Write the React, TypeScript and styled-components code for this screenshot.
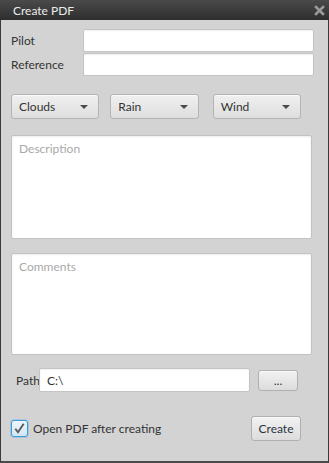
import React from 'react';
import styled, { createGlobalStyle } from 'styled-components';

const GlobalStyle = createGlobalStyle`
  html, body {
    margin: 0;
    padding: 0;
    background: #d3d3d3;
  }
  * {
    box-sizing: border-box;
  }
`;

const Window = styled.div`
  width: 329px;
  height: 463px;
  display: flex;
  flex-direction: column;
  background: #d3d3d3;
  border-left: 1px solid #3a3a3a;
  border-right: 1px solid #3a3a3a;
  border-bottom: 2px solid #4a4a4a;
  font-family: Lato, "Liberation Sans", sans-serif;
  font-size: 12px;
  color: #333;
`;

const TitleBar = styled.div`
  height: 20px;
  flex: none;
  display: flex;
  align-items: center;
  justify-content: space-between;
  padding: 0 4px 0 13px;
  background: linear-gradient(#4a4a4a, #2e2e2e);
  color: #ececec;
  font-size: 12px;
  margin: 0 -1px;
`;

const Close = styled.svg`
  width: 11px;
  height: 11px;
`;

const Body = styled.div`
  flex: 1;
  display: flex;
  flex-direction: column;
  padding: 9px 27px 0 9px;
`;

const FormGrid = styled.div`
  display: grid;
  grid-template-columns: 73px 231px;
  grid-auto-rows: 23px;
  row-gap: 1px;
  align-items: center;
`;

const Label = styled.span<{ $indent?: number; $width?: number }>`
  padding-left: ${(p) => p.$indent ?? 0}px;
  width: ${(p) => (p.$width ? `${p.$width}px` : 'auto')};
  flex: none;
`;

const TextField = styled.div<{ $width?: number }>`
  height: ${(p) => (p.$width ? '24px' : '23px')};
  width: ${(p) => (p.$width ? `${p.$width}px` : 'auto')};
  background: #fff;
  border: 1px solid #c4c4c4;
  border-radius: 2px;
  box-shadow: inset 0 1px 2px rgba(0, 0, 0, 0.06);
  display: flex;
  align-items: center;
  padding: 1px 0 0 7px;
  color: #333;
`;

const ComboRow = styled.div`
  display: flex;
  gap: 11px;
  margin-top: 18px;
  padding-left: 1px;
`;

const Combo = styled.div<{ $shift?: number }>`
  width: 89px;
  height: 25px;
  margin-left: ${(p) => p.$shift ?? 0}px;
  display: flex;
  align-items: center;
  justify-content: space-between;
  padding: 0 10px 0 7px;
  border: 1px solid #b4b4b4;
  border-radius: 3px;
  background: linear-gradient(#f0f0f0, #dedede);
  box-shadow: inset 0 1px 0 #fafafa;
  color: #333;
`;

const Arrow = styled.span`
  width: 0;
  height: 0;
  border-left: 4px solid transparent;
  border-right: 4px solid transparent;
  border-top: 4px solid #4a4a4a;
`;

const TextArea = styled.div<{ $height: number; $top: number }>`
  width: 301px;
  height: ${(p) => p.$height}px;
  margin: ${(p) => p.$top}px 0 0 1px;
  background: #fff;
  border: 1px solid #c2c2c2;
  border-radius: 2px;
  box-shadow: inset 0 1px 2px rgba(0, 0, 0, 0.08);
  padding: 5px 7px;
  color: #a9a9a9;
`;

const PathRow = styled.div`
  display: flex;
  align-items: center;
  margin-top: 13px;
`;

const Button = styled.div<{ $width: number; $height: number }>`
  width: ${(p) => p.$width}px;
  height: ${(p) => p.$height}px;
  flex: none;
  display: flex;
  align-items: center;
  justify-content: center;
  border: 1px solid #b0b0b0;
  border-radius: 3px;
  background: linear-gradient(#f2f2f2, #dcdcdc);
  box-shadow: inset 0 1px 0 #fbfbfb;
  color: #2a3442;
`;

const BrowseButton = styled(Button)`
  margin-left: 8px;
`;

const BottomRow = styled.div`
  display: flex;
  align-items: center;
  justify-content: space-between;
  margin-top: 24px;
`;

const CheckLabel = styled.label`
  display: flex;
  align-items: center;
  gap: 5px;
  padding-left: 1px;
`;

const CheckBox = styled.span`
  width: 17px;
  height: 17px;
  border: 1px solid #3c9ad6;
  border-radius: 3px;
  background: linear-gradient(#eef5fb, #d3e6f4);
  box-shadow: 0 0 0 1px rgba(100, 170, 220, 0.35);
  display: flex;
  align-items: center;
  justify-content: center;
`;

export default function App() {
  return (
    <>
      <GlobalStyle />
      <Window>
        <TitleBar>
          <span>Create PDF</span>
          <Close viewBox="0 0 11 11">
            <path d="M2 2 L9 9 M9 2 L2 9" stroke="#9a9a9a" strokeWidth="2.6" strokeLinecap="square" />
          </Close>
        </TitleBar>
        <Body>
          <FormGrid>
            <Label $indent={1}>Pilot</Label>
            <TextField />
            <Label $indent={1}>Reference</Label>
            <TextField />
          </FormGrid>
          <ComboRow>
            <Combo>
              Clouds <Arrow />
            </Combo>
            <Combo>
              Rain <Arrow />
            </Combo>
            <Combo $shift={3}>
              Wind <Arrow />
            </Combo>
          </ComboRow>
          <TextArea $height={104} $top={16}>Description</TextArea>
          <TextArea $height={102} $top={14}>Comments</TextArea>
          <PathRow>
            <Label $indent={6} $width={29}>Path</Label>
            <TextField $width={211}>C:\</TextField>
            <BrowseButton $width={40} $height={21}>...</BrowseButton>
          </PathRow>
          <BottomRow>
            <CheckLabel>
              <CheckBox>
                <svg width="13" height="13" viewBox="0 0 13 13">
                  <path d="M2.3 6.8 L5 10.2 L10.7 1.8" fill="none" stroke="#555" strokeWidth="1.8" />
                </svg>
              </CheckBox>
              Open PDF after creating
            </CheckLabel>
            <Button $width={50} $height={25}>Create</Button>
          </BottomRow>
        </Body>
      </Window>
    </>
  );
}
